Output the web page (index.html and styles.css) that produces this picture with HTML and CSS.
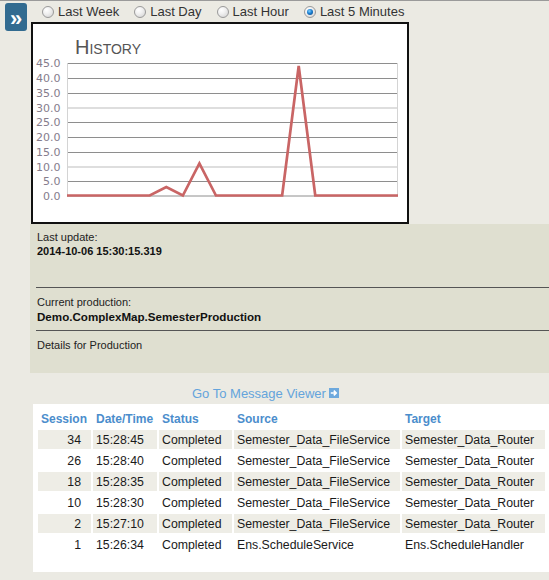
FILE: index.html
```html
<!DOCTYPE html>
<html>
<head>
<meta charset="utf-8">
<link rel="stylesheet" href="styles.css">
</head>
<body>
<div class="topline"></div>
<div class="page">
  <aside class="side">
    <div class="expand">»</div>
  </aside>
  <main class="content">
    <div class="ranges">
      <label class="opt"><span class="radio"></span>Last Week</label>
      <label class="opt"><span class="radio"></span>Last Day</label>
      <label class="opt"><span class="radio"></span>Last Hour</label>
      <label class="opt"><span class="radio on"></span>Last 5 Minutes</label>
    </div>
    <div class="chart">
      <svg class="chart-svg" width="374" height="198" viewBox="33 24 374 198">
        <text class="title" x="75" y="54">History</text>
        <g class="grid">
          <line x1="67" x2="398" y1="63.5" y2="63.5"/>
          <line x1="67" x2="398" y1="78.5" y2="78.5"/>
          <line x1="67" x2="398" y1="93.5" y2="93.5"/>
          <line class="soft" x1="67" x2="398" y1="108" y2="108"/>
          <line x1="67" x2="398" y1="122.5" y2="122.5"/>
          <line x1="67" x2="398" y1="137.5" y2="137.5"/>
          <line x1="67" x2="398" y1="152.5" y2="152.5"/>
          <line class="soft" x1="67" x2="398" y1="167" y2="167"/>
          <line x1="67" x2="398" y1="181.5" y2="181.5"/>
          <line x1="67" x2="398" y1="196" y2="196"/>
        </g>
        <g class="axis">
          <line x1="67.5" x2="67.5" y1="63" y2="196"/>
          <line x1="397.5" x2="397.5" y1="63" y2="196"/>
        </g>
        <g class="ylabels">
          <text x="60.5" y="67">45.0</text>
          <text x="60.5" y="82">40.0</text>
          <text x="60.5" y="97">35.0</text>
          <text x="60.5" y="111.5">30.0</text>
          <text x="60.5" y="126">25.0</text>
          <text x="60.5" y="141">20.0</text>
          <text x="60.5" y="156">15.0</text>
          <text x="60.5" y="170.5">10.0</text>
          <text x="60.5" y="185">5.0</text>
          <text x="60.5" y="199.5">0.0</text>
        </g>
        <polyline class="series" points="67,195.5 149.75,195.5 166.3,187 182.85,195.5 199.4,163.5 215.95,195.5 282.15,195.5 298.7,66 315.25,195.5 398,195.5"/>
      </svg>
    </div>
    <div class="info">
      <div class="label">Last update:</div>
      <div class="date">2014-10-06 15:30:15.319</div>
      <div class="rule first"></div>
      <div class="label prod-label">Current production:</div>
      <div class="prod">Demo.ComplexMap.SemesterProduction</div>
      <div class="rule second"></div>
      <div class="label details">Details for Production</div>
    </div>
    <div class="linkrow">
      <a class="viewer">Go To Message Viewer</a>
      <svg class="go-icon" width="10" height="10" viewBox="0 0 10 10">
        <rect width="10" height="10" fill="#6ea9dd"/>
        <path d="M1.8 5H7M4.8 2.6L7.2 5 4.8 7.4" fill="none" stroke="#fff" stroke-width="1.6"/>
      </svg>
    </div>
    <div class="tablewrap">
      <table class="msgs">
        <thead>
          <tr><th class="c-session">Session</th><th class="c-date">Date/Time</th><th class="c-status">Status</th><th class="c-source">Source</th><th class="c-target">Target</th></tr>
        </thead>
        <tbody>
          <tr class="odd"><td class="num">34</td><td>15:28:45</td><td>Completed</td><td>Semester_Data_FileService</td><td>Semester_Data_Router</td></tr>
          <tr><td class="num">26</td><td>15:28:40</td><td>Completed</td><td>Semester_Data_FileService</td><td>Semester_Data_Router</td></tr>
          <tr class="odd"><td class="num">18</td><td>15:28:35</td><td>Completed</td><td>Semester_Data_FileService</td><td>Semester_Data_Router</td></tr>
          <tr><td class="num">10</td><td>15:28:30</td><td>Completed</td><td>Semester_Data_FileService</td><td>Semester_Data_Router</td></tr>
          <tr class="odd"><td class="num">2</td><td>15:27:10</td><td>Completed</td><td>Semester_Data_FileService</td><td>Semester_Data_Router</td></tr>
          <tr><td class="num">1</td><td>15:26:34</td><td>Completed</td><td>Ens.ScheduleService</td><td>Ens.ScheduleHandler</td></tr>
        </tbody>
      </table>
    </div>
  </main>
</div>
</body>
</html>
```

FILE: styles.css
```css
html, body {
  margin: 0;
  padding: 0;
  background: #ebeae3;
  font-family: "Liberation Sans", Arial, sans-serif;
  color: #222;
}

.topline {
  height: 1px;
  background: #9a9a9a;
}

.page {
  display: flex;
  align-items: flex-start;
}

.side {
  width: 30px;
  flex: none;
}

.expand {
  margin: 2px 0 0 5px;
  width: 22px;
  height: 28px;
  border-radius: 3px;
  background: #326b90;
  color: #fff;
  font-weight: bold;
  font-size: 22px;
  line-height: 32px;
  text-align: center;
}

.content {
  flex: 1;
  display: flex;
  flex-direction: column;
}

.ranges {
  height: 21px;
  display: flex;
  align-items: center;
  padding-left: 12px;
  gap: 15px;
  font-size: 13px;
  color: #333;
}

.opt {
  display: flex;
  align-items: center;
  gap: 4px;
}

.radio {
  width: 10px;
  height: 10px;
  border-radius: 50%;
  border: 1px solid #9a9a9a;
  background: radial-gradient(circle at 35% 30%, #ffffff 0%, #f0f0f0 40%, #cfcfcf 100%);
  position: relative;
}

.radio.on::after {
  content: "";
  position: absolute;
  left: 2px;
  top: 2px;
  width: 6px;
  height: 6px;
  border-radius: 50%;
  background: radial-gradient(circle at 40% 35%, #7fd0ff 0%, #1b7fd0 45%, #0a3f7a 100%);
}

.chart {
  margin-left: 1px;
  width: 374px;
  height: 198px;
  border: 2px solid #111;
  background: #fff;
}

.chart-svg {
  display: block;
}

.title {
  font-family: "Liberation Sans", Arial, sans-serif;
  font-variant: small-caps;
  font-size: 20px;
  fill: #555;
}

.grid line {
  stroke: #8e8e8e;
  stroke-width: 1;
}

.grid line.soft {
  stroke: #bdbdbd;
}

.axis line {
  stroke: #d4d4d4;
  stroke-width: 1;
}

.ylabels text {
  font-family: "DejaVu Sans", Verdana, sans-serif;
  font-size: 11px;
  fill: #857d8c;
  text-anchor: end;
}

.series {
  fill: none;
  stroke: #c96565;
  stroke-width: 2.7;
  stroke-linejoin: miter;
}

.info {
  background: #dfdfd0;
  padding: 6px 0 21px 7px;
  height: 122px;
}

.label {
  font-size: 11px;
  line-height: 14px;
  color: #222;
}

.date {
  font-size: 11px;
  font-weight: bold;
  line-height: 14px;
  color: #111;
}

.rule {
  height: 1px;
  background: #555;
  margin-left: -1px;
}

.rule.first {
  margin-top: 29px;
}

.prod-label {
  margin-top: 7px;
}

.prod {
  font-size: 11.6px;
  font-weight: bold;
  line-height: 15px;
  color: #111;
}

.rule.second {
  margin-top: 6px;
}

.details {
  margin-top: 7px;
}

.linkrow {
  height: 31px;
  display: flex;
  align-items: center;
  padding-left: 162px;
  padding-top: 9px;
  box-sizing: border-box;
  gap: 3px;
}

.viewer {
  font-size: 13px;
  color: #64a4dc;
}

.go-icon {
  display: block;
}

.tablewrap {
  margin-left: 3px;
  background: #fff;
  padding: 0 2px 16px 3px;
}

.msgs {
  border-collapse: separate;
  border-spacing: 2px;
  font-size: 12.3px;
}

.msgs th {
  height: 19px;
  padding: 3px 3px 0;
  text-align: left;
  font-size: 12px;
  font-weight: bold;
  color: #4b8dcc;
  vertical-align: middle;
}

.msgs td {
  height: 19px;
  padding: 0 2px 0 3px;
  white-space: nowrap;
  color: #1a1a1a;
}

.msgs tr.odd td {
  background: #eeede6;
}

.msgs td.num {
  text-align: right;
  padding-right: 10px;
}

.c-session { width: 47px; }
.c-date { width: 58px; }
.c-status { width: 67px; }
.c-source { width: 160px; }
.c-target { width: 137px; }
```
